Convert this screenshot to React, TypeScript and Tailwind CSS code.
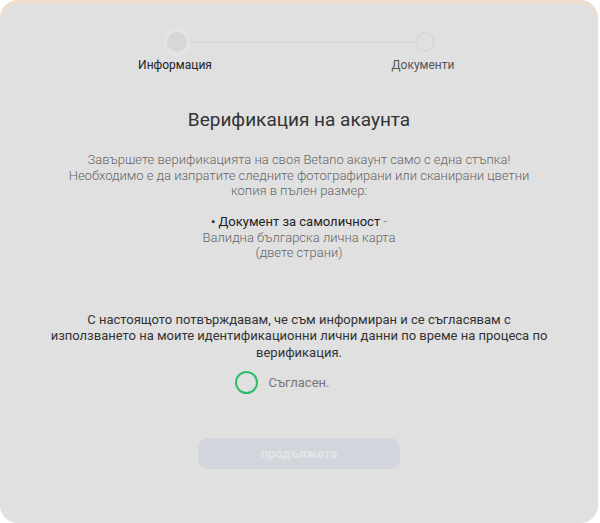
import React, { useState } from "react";

const App = () => {
  const [agreed, setAgreed] = useState(false);

  return (
    <div className="min-h-screen bg-white" style={{ fontFamily: "Roboto, 'Liberation Sans', sans-serif" }}>
      <div className="w-[598px] h-[523px] rounded-[18px] bg-[#eedccd] pt-[4px] overflow-hidden">
        <div className="h-full rounded-[18px] bg-[#e0e0e0] flex flex-col items-center">
          {/* Stepper */}
          <div className="mt-[24px] flex items-center w-[272px]">
            <div className="w-[28px] h-[28px] rounded-full bg-[#e3e4e6] flex items-center justify-center">
              <div className="w-[20px] h-[20px] rounded-full bg-[#d5d7d9]" />
            </div>
            <div className="flex-1 h-[2px] bg-[#d7d8d8]" />
            <div className="w-[20px] h-[20px] rounded-full border-2 border-[#d4d8d9]" />
          </div>
          <div className="w-[348px] flex justify-between mt-[1px] text-[12px] leading-[16px]">
            <div className="w-[100px] text-center text-[#222]">Информация</div>
            <div className="w-[100px] text-center text-[#555]">Документи</div>
          </div>

          <h1 className="mt-[35px] text-[19px] text-[#333] leading-[24px]">Верификация на акаунта</h1>

          <div className="mt-[20px] w-[470px] text-center text-[13px] leading-[15.5px] font-light text-[#666]">
            <p>
              Завършете верификацията на своя Betano акаунт само с една стъпка! Необходимо е да изпратите следните
              фотографирани или сканирани цветни копия в пълен размер:
            </p>
            <p className="mt-[15.5px]">
              <span className="font-normal text-[#222]">• Документ за самоличност</span> -
            </p>
            <p>Валидна българска лична карта</p>
            <p>(двете страни)</p>
          </div>

          <p className="mt-[51px] w-[500px] text-center text-[13px] leading-[16.5px] text-[#333]">
            С настоящото потвърждавам, че съм информиран и се съгласявам с използването на моите идентификационни
            лични данни по време на процеса по верификация.
          </p>

          <label className="mt-[10px] flex items-center gap-[11px] cursor-pointer ml-[-34px]">
            <button
              onClick={() => setAgreed((a) => !a)}
              className="w-[23px] h-[23px] rounded-full border-2 border-[#2dbd68] flex items-center justify-center"
            >
              {agreed && <span className="w-[11px] h-[11px] rounded-full bg-[#2dbd68]" />}
            </button>
            <span className="text-[13px] text-[#777]">Съгласен.</span>
          </label>

          <button
            disabled={!agreed}
            className="mt-[44px] w-[202px] h-[31px] rounded-[10px] bg-[#d2d6dc] text-[13px] font-bold text-[#e3e4e6]"
          >
            продължете
          </button>
        </div>
      </div>
    </div>
  );
};

export default App;
